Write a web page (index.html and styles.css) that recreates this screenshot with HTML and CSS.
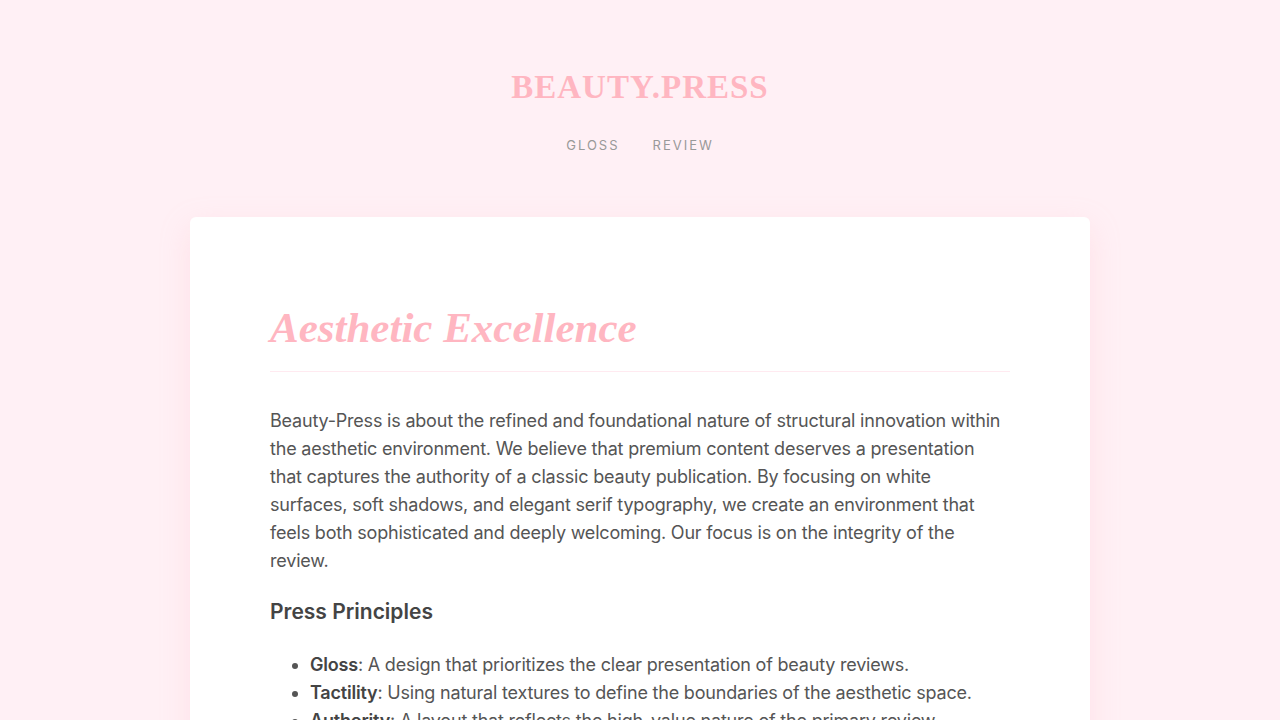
FILE: index.html
```html
<!DOCTYPE html>
<html lang="en">
<head>
    <meta charset="UTF-8">
    <meta name="viewport" content="width=device-width, initial-scale=1.0">
    <title>Beauty.Press</title>
    <link rel="stylesheet" href="styles.css">
</head>
<body>
    <header class="site-header">
        <div class="brand">BEAUTY.PRESS</div>
        <nav class="nav">
            <a href="#" class="nav-link">GLOSS</a>
            <a href="#" class="nav-link">REVIEW</a>
        </nav>
    </header>
    <main class="card">
        <h1 class="title">Aesthetic Excellence</h1>
        <p class="lead">Beauty-Press is about the refined and foundational nature of structural innovation within the aesthetic environment. We believe that premium content deserves a presentation that captures the authority of a classic beauty publication. By focusing on white surfaces, soft shadows, and elegant serif typography, we create an environment that feels both sophisticated and deeply welcoming. Our focus is on the integrity of the review.</p>
        <h3 class="subhead">Press Principles</h3>
        <ul class="principles">
            <li><strong>Gloss</strong>: A design that prioritizes the clear presentation of beauty reviews.</li>
            <li><strong>Tactility</strong>: Using natural textures to define the boundaries of the aesthetic space.</li>
            <li><strong>Authority</strong>: A layout that reflects the high-value nature of the primary review.</li>
        </ul>
    </main>
</body>
</html>
```

FILE: styles.css
```css
body {
    margin: 0;
    padding: 0;
    background-color: #fff0f5;
    font-family: Inter, "Open Sans", sans-serif;
    color: #555;
}
.site-header {
    padding: 65px 0 64px;
    text-align: center;
}
.brand {
    font-family: "Liberation Serif", serif;
    font-weight: bold;
    font-size: 33px;
    letter-spacing: 1px;
    color: #ffb6c1;
    line-height: 44px;
}
.nav {
    margin-top: 28px;
    display: flex;
    justify-content: center;
    gap: 33px;
}
.nav-link {
    font-size: 13px;
    letter-spacing: 2px;
    color: #999;
    text-decoration: none;
}
.card {
    width: 740px;
    margin: 0 auto;
    padding: 80px;
    background-color: #fff;
    border-radius: 6px;
    box-shadow: 0 10px 30px rgba(255, 182, 193, 0.25);
}
.title {
    margin: 0;
    padding-bottom: 12px;
    border-bottom: 1px solid #ffeaf0;
    font-family: "Liberation Serif", serif;
    font-style: italic;
    font-weight: bold;
    font-size: 43px;
    line-height: 62px;
    color: #ffb6c1;
}
.lead {
    margin: 35px 0 0;
    font-size: 18px;
    line-height: 28px;
    letter-spacing: -0.2px;
    color: #555;
}
.subhead {
    margin: 22px 0 0;
    font-size: 21px;
    font-weight: 600;
    line-height: 30px;
    color: #444;
}
.principles {
    margin: 24px 0 0;
    padding-left: 40px;
    font-size: 18px;
    line-height: 28px;
    letter-spacing: -0.2px;
}
.principles strong {
    font-weight: 600;
    color: #444;
}
```
